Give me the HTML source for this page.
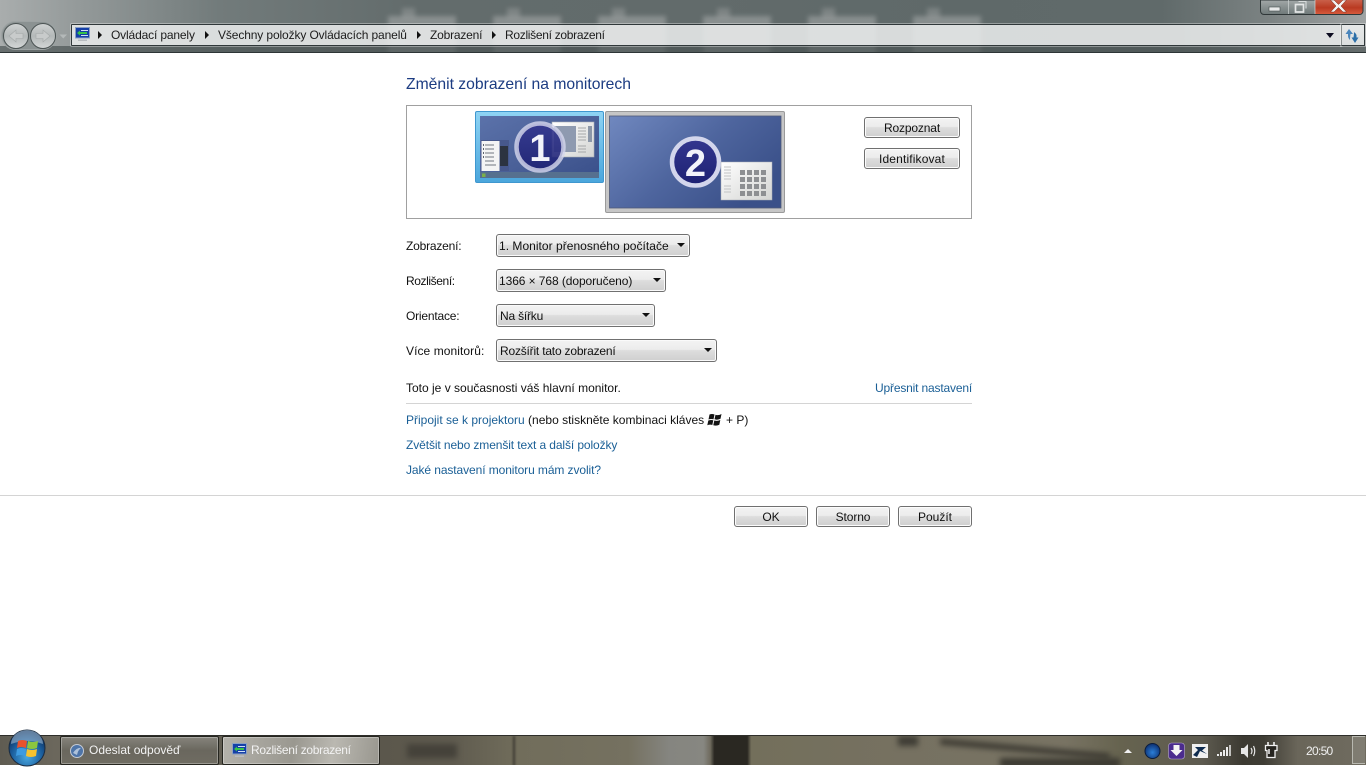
<!DOCTYPE html>
<html lang="cs">
<head>
<meta charset="utf-8">
<title>Rozlišení zobrazení</title>
<style>
html,body{margin:0;padding:0;background:#fff;width:1366px;height:768px;overflow:hidden}
body{position:relative;font-family:"Liberation Sans",sans-serif;font-size:12px;color:#111}
.a{position:absolute}
.t{position:absolute;white-space:nowrap;line-height:16px}
.l{color:#1a5f96}
#head{left:0;top:0;width:1366px;height:53px;overflow:hidden;
background:linear-gradient(90deg,#a9adad 0,#939999 6%,#727b7b 16%,#636c6c 30%,#626b6b 50%,#5f6969 70%,#606a6a 85%,#7c8383 93%,#a0a4a4 100%)}
.blur{position:absolute;top:16px;width:68px;height:40px;background:#d8d8d8;filter:blur(2.500px);opacity:.33}
.tip{position:absolute;top:8px;width:13px;height:10px;background:#c5c5c5;filter:blur(2.500px);opacity:.28}
#addr{left:71px;top:24px;width:1269px;height:20px;border:1px solid #30383a;border-radius:1px;
background:rgba(232,235,235,.88);box-shadow:0 0 0 1px rgba(255,255,255,.35)}
#ref{left:1341px;top:24px;width:22px;height:20px;border:1px solid #30383a;border-left:1px solid #8a9090;
background:linear-gradient(180deg,#e6e8e8,#dcdfdf);box-shadow:0 0 0 1px rgba(255,255,255,.35)}
.crumb{top:27px;color:#1c1c1c;font-size:12px}
.arr{position:absolute;top:31px;width:0;height:0;border-left:4px solid #111;border-top:4px solid transparent;border-bottom:4px solid transparent}
#title{left:406px;top:75px;font-size:15.7px;line-height:20px;color:#1c3c82}
#box{left:406px;top:105px;width:564px;height:112px;border:1px solid #a0a0a0}
.btn{position:absolute;border:1px solid #707070;border-radius:3px;box-sizing:border-box;text-align:center;color:#111;
background:linear-gradient(180deg,#f3f3f3 0,#ececec 45%,#dddddd 50%,#cfcfcf 100%);box-shadow:inset 0 0 0 1px #fcfcfc;line-height:20px}
.sel{position:absolute;box-sizing:border-box;height:23px;border:1px solid #707070;border-radius:3px;
background:linear-gradient(180deg,#f3f3f3 0,#ececec 45%,#dddddd 50%,#cfcfcf 100%);box-shadow:inset 0 0 0 1px #fafafa;line-height:22px;padding-left:3px;color:#111;white-space:nowrap}
.sel i{position:absolute;right:4px;top:8px;width:0;height:0;border-top:4px solid #111;border-left:4px solid transparent;border-right:4px solid transparent}
.hr{position:absolute;height:1px;background:#d4d4d4}
#bar{left:0;top:735px;width:1366px;height:30px;border-top:1px solid #2e2e2a;box-sizing:border-box;overflow:hidden;
background:linear-gradient(90deg,#5f5c52 0,#6b675c 4%,#5a564b 27%,#5f5b4f 33%,#716d5b 38%,#757160 46%,#858580 49%,#878781 51.500%,#6f6b5e 52%,#2a2822 52.300%,#2a2822 54.700%,#736f5b 55%,#767161 66%,#787363 78%,#66634f 82%,#5e5b50 88%,#3c3a32 91%,#3f3d35 92.500%,#6a665a 95%,#6f6b5f 100%)}
#bar b{position:absolute;display:block;filter:blur(3px)}
.task{position:absolute;top:736px;height:29px;box-sizing:border-box;border:1px solid #25251f;border-radius:2px;box-shadow:inset 0 0 0 1px rgba(255,255,255,.3);color:#f2f2f2;line-height:26px;white-space:nowrap}
</style>
</head>
<body>

<div class="a" id="head">
  <div class="blur" style="left:388px"></div>
  <div class="blur" style="left:493px"></div>
  <div class="blur" style="left:598px"></div>
  <div class="blur" style="left:703px"></div>
  <div class="blur" style="left:808px"></div>
  <div class="blur" style="left:913px"></div>
  <div class="tip" style="left:402px"></div>
  <div class="tip" style="left:507px"></div>
  <div class="tip" style="left:612px"></div>
  <div class="tip" style="left:717px"></div>
  <div class="tip" style="left:822px"></div>
  <div class="tip" style="left:927px"></div>
  <div class="a" style="left:0;top:46px;width:1366px;height:6px;background:#4a5353;opacity:.68"></div>
  <div class="a" style="left:0;top:52px;width:1366px;height:1px;background:#2d3536"></div>
</div>

<!-- window controls -->
<svg class="a" style="left:1260px;top:0" width="104" height="16" viewBox="0 0 104 16">
  <defs>
    <linearGradient id="cg" x1="0" y1="0" x2="0" y2="1"><stop offset="0" stop-color="#c9604a"/><stop offset=".55" stop-color="#b93a22"/><stop offset="1" stop-color="#d65a3c"/></linearGradient>
    <linearGradient id="mg" x1="0" y1="0" x2="0" y2="1"><stop offset="0" stop-color="#a2a8a8"/><stop offset="1" stop-color="#6e7878"/></linearGradient>
  </defs>
  <path d="M.5 0V11a3.500 3.500 0 0 0 3.500 3.500H99.500a3.500 3.500 0 0 0 3.500-3.500V0Z" fill="url(#mg)" stroke="#2f3738"/>
  <path d="M55 0H102.500V11a3 3 0 0 1-3 3H55Z" fill="url(#cg)"/>
  <path d="M28.500 0V14M55 0V14" stroke="#cfd4d4" stroke-opacity=".7"/>
  <rect x="9" y="7" width="11" height="4" fill="#e8eaea" stroke="#444c4c" stroke-width=".6"/>
  <path d="M35.500 4.500H43.500V12H35.500Z" fill="none" stroke="#e4e6e6" stroke-width="1.700"/>
  <path d="M38.500 1.500H46V8.500" fill="none" stroke="#d8dcdc" stroke-width="1.100"/>
  <path d="M74 0L78.500 4.500L83 0H86.500L81 6L86.500 12H83L78.500 7.500L74 12H70.500L76 6L70.500 0Z" fill="#f2f2f2" stroke="#7b2a1a" stroke-width=".5"/>
</svg>

<!-- nav buttons -->
<svg class="a" style="left:0;top:20px" width="72" height="32" viewBox="0 0 72 32">
  <defs>
    <linearGradient id="ng" x1="0" y1="0" x2="0" y2="1"><stop offset="0" stop-color="#d0d3d3"/><stop offset=".5" stop-color="#b4b9b9"/><stop offset="1" stop-color="#d4d7d7"/></linearGradient>
  </defs>
  <rect x="1.500" y="1.500" width="55" height="28" rx="14" fill="#8b9292" stroke="#9da3a3"/>
  <circle cx="16" cy="16" r="12.500" fill="url(#ng)" stroke="#4c5454"/>
  <circle cx="43" cy="16" r="12.500" fill="url(#ng)" stroke="#4c5454"/>
  <path d="M9 16L16 10V13.500H23V18.500H16V22Z" fill="#c8cbcb" stroke="#a3a8a8" stroke-width=".6"/>
  <path d="M50 16L43 10V13.500H36V18.500H43V22Z" fill="#c8cbcb" stroke="#a3a8a8" stroke-width=".6"/>
  <path d="M59.500 14.500H67L63.250 18.500Z" fill="#b4b9b9"/>
</svg>

<div class="a" id="addr"></div>
<div class="a" id="ref"></div>
<!-- address icon -->
<svg class="a" style="left:75px;top:27px" width="16" height="16" viewBox="0 0 16 16">
  <rect x=".5" y=".5" width="14" height="10.500" fill="#1540a8" stroke="#8aa0c4"/>
  <path d="M2 6L5 3.500V5H12V7H5V8.500Z" fill="#35c24a"/>
  <path d="M6 3H13V4H6ZM6 8H13V9H6Z" fill="#cfe0f4"/>
  <path d="M3 12.500H12V14H3Z" fill="#b8bcc0"/>
</svg>
<div class="arr" style="left:98px"></div>
<div class="t crumb" style="left:111px;letter-spacing:-.15px">Ovládací panely</div>
<div class="arr" style="left:205px"></div>
<div class="t crumb" style="left:218px;letter-spacing:-.12px">Všechny položky Ovládacích panelů</div>
<div class="arr" style="left:417px"></div>
<div class="t crumb" style="left:430px;letter-spacing:-.2px">Zobrazení</div>
<div class="arr" style="left:492px"></div>
<div class="t crumb" style="left:505px;letter-spacing:-.3px">Rozlišení zobrazení</div>
<div class="a" style="left:1326px;top:33px;width:0;height:0;border-top:5px solid #0c0c20;border-left:4px solid transparent;border-right:4px solid transparent"></div>
<svg class="a" style="left:1344px;top:27px" width="18" height="17" viewBox="0 0 18 17">
  <path d="M5 2L1.500 7H4V9Q4 11 6 13Q6 10 6.500 7H9Z" fill="#4a86bc"/>
  <path d="M11 16L14.500 10.500H12.500V8Q12 6.500 10 5Q10 8 9.500 10.500H7.500Z" fill="#2c6fa8"/>
</svg>

<div class="t" id="title">Změnit zobrazení na monitorech</div>
<div class="a" id="box"></div>

<!-- monitors -->
<svg class="a" style="left:474px;top:110px" width="314" height="104" viewBox="0 0 314 104">
  <defs>
    <linearGradient id="d1" x1="0" y1="0" x2="1" y2="1"><stop offset="0" stop-color="#5b72aa"/><stop offset=".55" stop-color="#4a6098"/><stop offset="1" stop-color="#394f8a"/></linearGradient>
    <linearGradient id="d2" x1="0" y1="0" x2="1" y2=".6"><stop offset="0" stop-color="#7088bf"/><stop offset=".55" stop-color="#4e659e"/><stop offset="1" stop-color="#3a5089"/></linearGradient>
    <linearGradient id="win" x1="0" y1="0" x2="1" y2="1"><stop offset="0" stop-color="#ffffff"/><stop offset="1" stop-color="#d3d4d2"/></linearGradient>
    <linearGradient id="nb" x1="0" y1="0" x2="0" y2="1"><stop offset="0" stop-color="#34378f"/><stop offset="1" stop-color="#1d2173"/></linearGradient>
    <linearGradient id="f1" x1="0" y1="0" x2="0" y2="1"><stop offset="0" stop-color="#8fd4f4"/><stop offset="1" stop-color="#4aa6dc"/></linearGradient>
  </defs>
  <!-- monitor 1 -->
  <rect x="1.500" y="1.500" width="128" height="71" rx="1.500" fill="url(#f1)" stroke="#3f97cf"/>
  <rect x="6" y="6" width="119" height="62" fill="url(#d1)"/>
  <rect x="6" y="62" width="119" height="6" fill="#56708f"/>
  <rect x="8" y="63.500" width="3.500" height="3.500" fill="#7cb04a"/>
  <rect x="7" y="30" width="28" height="31" fill="#47588c"/>
  <rect x="7.500" y="31" width="18" height="30" fill="#f4f4f4"/>
  <rect x="26" y="36" width="8" height="20" fill="#2c3340"/>
  <path d="M11 35H20M11 39H20M11 43H20M11 47H20M11 51H20M11 55H22" stroke="#8a8f98" stroke-width="1.200"/>
  <path d="M9 35H10M9 39H10M9 43H10M9 47H10" stroke="#2c3340" stroke-width="1.500"/>
  <rect x="78" y="12" width="42" height="35" fill="url(#win)" stroke="#a9adb5" stroke-width=".6"/>
  <rect x="80" y="16" width="22" height="26" fill="#8e9ab0"/>
  <path d="M104 18H112M104 21H112M104 24H112M104 27H112M104 30H112M104 36H112M104 39H112M104 42H112" stroke="#a5a7a8"/>
  <rect x="114" y="16" width="4" height="16" fill="#8c97a8"/>
  <circle cx="66" cy="37" r="23.500" fill="url(#nb)" fill-opacity=".9" stroke="#d3d6ec" stroke-opacity=".82" stroke-width="4.500"/>
  <!-- monitor 2 -->
  <rect x="131.500" y="1.500" width="179" height="101" rx="1.500" fill="#c6c6c6" stroke="#9a9a9a"/>
  <rect x="135.500" y="6" width="171.500" height="92" fill="url(#d2)" stroke="#505a78" stroke-width=".8"/>
  <circle cx="221.500" cy="52" r="23.500" fill="url(#nb)" stroke="#d3d6ec" stroke-width="4.500"/>
  <rect x="247" y="52" width="51" height="38" fill="url(#win)" stroke="#a9adb5" stroke-width=".5"/>
  <path d="M250 57H257M250 60H257M250 63H257M250 66H257M250 69H257M250 76H257M250 79H257M250 82H257" stroke="#c1c3c4"/>
  <g fill="#8d8f92">
    <rect x="266" y="60" width="5" height="5"/><rect x="273" y="60" width="5" height="5"/><rect x="280" y="60" width="5" height="5"/><rect x="287" y="60" width="5" height="5"/>
    <rect x="266" y="67" width="5" height="5"/><rect x="273" y="67" width="5" height="5"/><rect x="280" y="67" width="5" height="5"/><rect x="287" y="67" width="5" height="5"/>
    <rect x="266" y="74" width="5" height="5"/><rect x="273" y="74" width="5" height="5"/><rect x="280" y="74" width="5" height="5"/><rect x="287" y="74" width="5" height="5"/>
    <rect x="266" y="81" width="5" height="5"/><rect x="273" y="81" width="5" height="5"/><rect x="280" y="81" width="5" height="5"/><rect x="287" y="81" width="5" height="5"/>
  </g>
  <text x="66" y="51" text-anchor="middle" font-family="'Liberation Sans',sans-serif" font-weight="bold" font-size="38" fill="#f2f3fa">1</text>
  <text x="221.500" y="66" text-anchor="middle" font-family="'Liberation Sans',sans-serif" font-weight="bold" font-size="38" fill="#f2f3fa">2</text>
</svg>

<div class="btn" style="left:864px;top:117px;width:96px;height:21px;letter-spacing:-.15px">Rozpoznat</div>
<div class="btn" style="left:864px;top:148px;width:96px;height:21px;letter-spacing:.15px">Identifikovat</div>

<div class="t" style="left:406px;top:238px;letter-spacing:-.2px">Zobrazení:</div>
<div class="sel" style="left:496px;top:234px;width:194px;padding-left:2px;letter-spacing:.03px">1. Monitor přenosného počítače<i></i></div>
<div class="t" style="left:406px;top:273px;letter-spacing:-.4px">Rozlišení:</div>
<div class="sel" style="left:496px;top:269px;width:170px;padding-left:2px;letter-spacing:-.08px">1366 × 768 (doporučeno)<i></i></div>
<div class="t" style="left:406px;top:308px;letter-spacing:-.2px">Orientace:</div>
<div class="sel" style="left:496px;top:304px;width:159px;letter-spacing:-.2px">Na šířku<i></i></div>
<div class="t" style="left:406px;top:343px;letter-spacing:.07px">Více monitorů:</div>
<div class="sel" style="left:496px;top:339px;width:221px;letter-spacing:-.2px">Rozšířit tato zobrazení<i></i></div>

<div class="t" style="left:406px;top:380px">Toto je v současnosti váš hlavní monitor.</div>
<div class="t l" style="left:875px;top:380px;letter-spacing:-.17px">Upřesnit nastavení</div>
<div class="hr" style="left:406px;top:403px;width:566px"></div>
<div class="t" style="left:406px;top:412px"><span class="l">Připojit se k projektoru</span> (nebo stiskněte kombinaci kláves</div>
<svg class="a" style="left:707px;top:413px" width="15" height="14" viewBox="0 0 15 14">
  <path d="M2.500 1.500Q5 .5 7.500 1.500L6.500 6.300Q4 5.500 1.500 6.500ZM8.500 1.700Q11.500 2.800 14.500 1L13.500 5.800Q10.500 7.300 7.500 6.300ZM1.300 7.500Q4 6.500 6.300 7.300L5.300 12Q3 11.200 .3 12.300ZM7.300 7.500Q10.500 8.500 13.300 7L12.300 11.700Q9.500 13.200 6.300 12.200Z" fill="#141414"/>
</svg>
<div class="t" style="left:726px;top:412px">+ P)</div>
<div class="t l" style="left:406px;top:437px;letter-spacing:-.1px">Zvětšit nebo zmenšit text a další položky</div>
<div class="t l" style="left:406px;top:462px;letter-spacing:-.09px">Jaké nastavení monitoru mám zvolit?</div>
<div class="hr" style="left:0;top:495px;width:1366px"></div>
<div class="btn" style="left:734px;top:506px;width:74px;height:21px">OK</div>
<div class="btn" style="left:816px;top:506px;width:74px;height:21px;letter-spacing:-.1px">Storno</div>
<div class="btn" style="left:898px;top:506px;width:74px;height:21px">Použít</div>

<!-- taskbar -->
<div class="a" id="bar">
  <b style="left:407px;top:8px;width:50px;height:14px;background:#45423a"></b>
  <b style="left:513px;top:0;width:2px;height:30px;background:#3c3a32;filter:blur(1px)"></b>
  <b style="left:898px;top:0;width:20px;height:10px;background:#3f3d35"></b>
  <b style="left:940px;top:10px;width:170px;height:6px;background:#3c3a32;transform:rotate(5deg)"></b>
  <b style="left:1000px;top:22px;width:120px;height:10px;background:#3c3a32"></b>
</div>
<div class="task" style="left:60px;width:159px;padding-left:28px;background:linear-gradient(180deg,#86847c,#6a675e 50%,#6f6c62)">Odeslat odpověď</div>
<svg class="a" style="left:69px;top:743px" width="16" height="16" viewBox="0 0 16 16">
  <circle cx="8" cy="8" r="6.500" fill="#4e74a8" stroke="#c4cad4"/>
  <path d="M4 10Q8 4 12 5Q9 7 8 12Z" fill="#aec1da"/>
</svg>
<div class="task" style="left:222px;width:158px;padding-left:28px;letter-spacing:-.3px;background:linear-gradient(100deg,#b4b2ab,#9a9890 45%,#bab8b1 70%,#98968e)">Rozlišení zobrazení</div>
<svg class="a" style="left:232px;top:743px" width="16" height="16" viewBox="0 0 16 16">
  <rect x=".5" y=".5" width="14" height="10.500" fill="#1540a8" stroke="#8aa0c4"/>
  <path d="M2 6L5 3.500V5H12V7H5V8.500Z" fill="#35c24a"/>
  <path d="M6 3H13V4H6ZM6 8H13V9H6Z" fill="#cfe0f4"/>
  <path d="M3 12.500H12V14H3Z" fill="#b8bcc0"/>
</svg>
<!-- start orb -->
<svg class="a" style="left:8px;top:729px" width="38" height="38" viewBox="0 0 38 38">
  <defs>
    <radialGradient id="orb" cx=".5" cy=".75" r=".7"><stop offset="0" stop-color="#4aa8e0"/><stop offset=".6" stop-color="#1b5f9e"/><stop offset="1" stop-color="#0d2e5c"/></radialGradient>
  </defs>
  <circle cx="19" cy="19" r="18" fill="url(#orb)" stroke="#1a2b40"/>
  <path d="M3 15A16 14 0 0 1 35 15Q19 9 3 15Z" fill="#b5cfe4" fill-opacity=".5"/>
  <path d="M10 12Q14 10 19 12L18 19Q13 17 9 19Z" fill="#e8532d"/>
  <path d="M20 12Q25 14 30 12L29 19Q24 21 19 19Z" fill="#8cc63f"/>
  <path d="M9 20Q13 18 18 20L17 27Q12 25 8 27Z" fill="#3e9be0"/>
  <path d="M19 20Q24 22 29 20L28 27Q23 29 18 27Z" fill="#f6c22f"/>
</svg>

<!-- tray -->
<div class="a" style="left:1124px;top:749px;width:0;height:0;border-bottom:4px solid #f0f0f0;border-left:4px solid transparent;border-right:4px solid transparent"></div>
<svg class="a" style="left:1143px;top:741px" width="140" height="20" viewBox="0 0 140 20">
  <defs><radialGradient id="bl" cx=".5" cy=".6" r=".6"><stop offset="0" stop-color="#2b7fd8"/><stop offset="1" stop-color="#0c2f70"/></radialGradient></defs>
  <circle cx="9.500" cy="10" r="7.500" fill="url(#bl)" stroke="#0b1c3a"/>
  <rect x="25.500" y="2" width="16" height="16" rx="3" fill="#4b2c8e" stroke="#b5a8cc" stroke-width=".6"/>
  <path d="M30.500 4H36.500V9H39.500L33.500 15L27.500 9H30.500Z" fill="#f4f4f4"/>
  <rect x="49" y="3" width="16" height="14" fill="#f0f0f0"/>
  <path d="M50 14L55 9L52 6H63L59 9.500L64 13L57 10L54 16ZM57 12L62 15" fill="#0f2c50"/>
  <g fill="#ececec"><rect x="74" y="13" width="2" height="2"/><rect x="77" y="11" width="2" height="4"/><rect x="80" y="9" width="2" height="6"/><rect x="83" y="6" width="2" height="9"/><rect x="86" y="4" width="2" height="11" opacity=".75"/></g>
  <path d="M98 7H101L105 3V17L101 13H98Z" fill="#e6e6e6"/>
  <path d="M108 7Q110 10 108 13M110.500 5Q113 10 110.500 15" fill="none" stroke="#e6e6e6" stroke-width="1.200"/>
  <path d="M125 4V1M131 4V1" stroke="#f0f0f0" stroke-width="1.600"/>
  <path d="M122.500 4.500H134V9.500H132V16.500H124V9.500H122.500Z" fill="#26241f" stroke="#f0f0f0" stroke-width="1.300"/>
  <path d="M126 8V13" stroke="#f0f0f0" stroke-width="1.500"/>
</svg>
<div class="t" style="left:1306px;top:743px;color:#f0f0f0;letter-spacing:-.7px">20:50</div>
<div class="a" style="left:1352px;top:736px;width:13px;height:28px;border:1px solid #b8b8b0;border-right:0;box-sizing:border-box;background:rgba(255,255,255,.12)"></div>

</body>
</html>
